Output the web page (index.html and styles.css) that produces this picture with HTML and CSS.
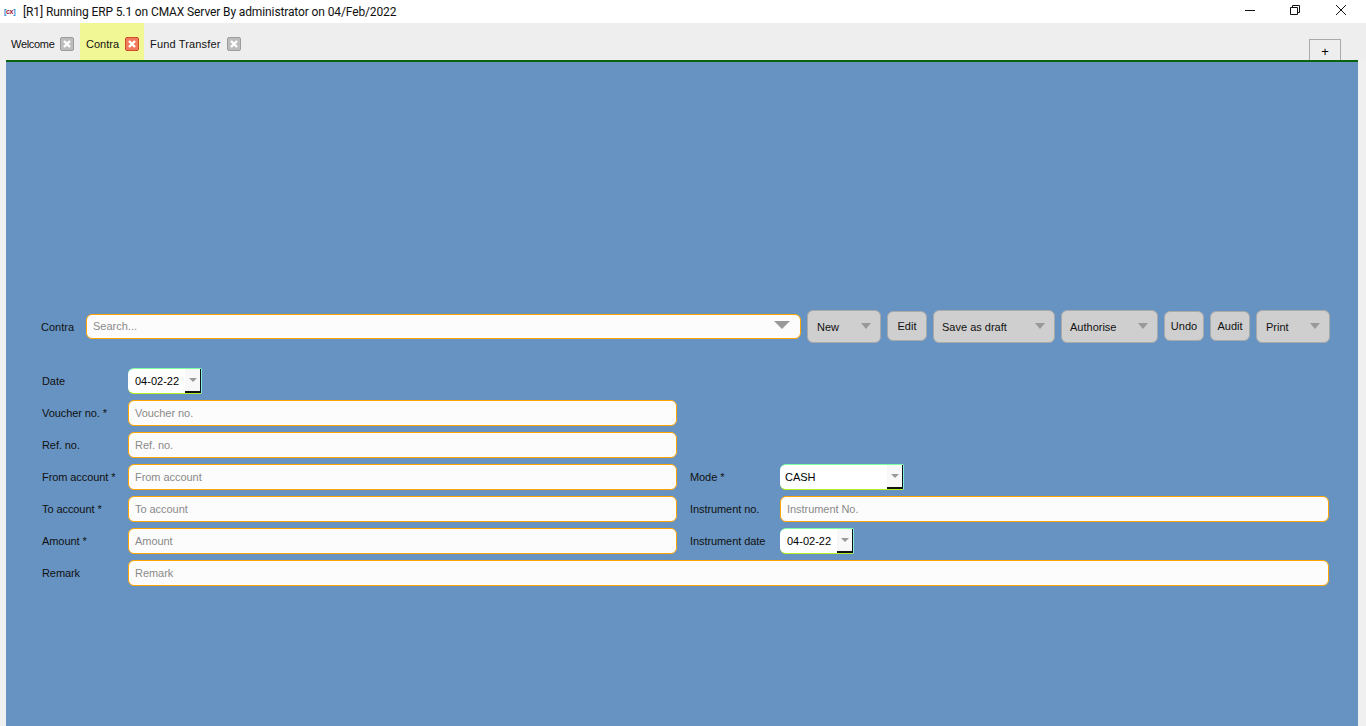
FILE: index.html
```html
<!DOCTYPE html>
<html lang="en">
<head>
<meta charset="utf-8">
<title>Running ERP</title>
<link rel="stylesheet" href="styles.css">
</head>
<body>
<header class="titlebar">
  <span class="app-icon"><span class="app-bracket">[</span>cx<span class="app-bracket">]</span></span>
  <span class="title">[R1] Running ERP 5.1 on CMAX Server By administrator on 04/Feb/2022</span>
  <div class="win-controls">
    <svg class="win-btn" viewBox="0 0 46 23"><path d="M19 10.5h10" stroke="#111" fill="none"/></svg>
    <svg class="win-btn" viewBox="0 0 46 23"><path d="M18.5 7.500h7v7h-7zM20.500 7.500v-2h7v7h-2" stroke="#111" fill="none"/></svg>
    <svg class="win-btn" viewBox="0 0 46 23"><path d="M18 5l10 10M28 5l-10 10" stroke="#111" fill="none"/></svg>
  </div>
</header>
<nav class="tabbar">
  <div class="tab tab-first"><span>Welcome</span><svg class="tab-close" viewBox="0 0 12 12"><path d="M3 3l6 6M9 3l-6 6"/></svg></div>
  <div class="tab tab-active"><span>Contra</span><svg class="tab-close" viewBox="0 0 12 12"><path d="M3 3l6 6M9 3l-6 6"/></svg></div>
  <div class="tab"><span>Fund Transfer</span><svg class="tab-close" viewBox="0 0 12 12"><path d="M3 3l6 6M9 3l-6 6"/></svg></div>
  <div class="tab-add">+</div>
</nav>
<main class="panel">
  <section class="toolbar">
    <label class="toolbar-label">Contra</label>
    <div class="search"><span class="ph">Search...</span><i class="caret caret-big"></i></div>
    <div class="btn btn-menu w-new"><span>New</span><i class="caret"></i></div>
    <div class="btn btn-plain w-small">Edit</div>
    <div class="btn btn-menu w-save"><span>Save as draft</span><i class="caret"></i></div>
    <div class="btn btn-menu w-auth"><span>Authorise</span><i class="caret"></i></div>
    <div class="btn btn-plain w-small">Undo</div>
    <div class="btn btn-plain w-small">Audit</div>
    <div class="btn btn-menu w-new"><span>Print</span><i class="caret"></i></div>
  </section>
  <section class="form">
    <label>Date</label>
    <div class="select select-date"><span>04-02-22</span><b class="drop"><i class="caret caret-small"></i></b></div>

    <label>Voucher no. *</label>
    <div class="input ph">Voucher no.</div>

    <label>Ref. no.</label>
    <div class="input ph">Ref. no.</div>

    <label>From account *</label>
    <div class="input ph">From account</div>
    <label class="label-2">Mode *</label>
    <div class="select select-mode"><span>CASH</span><b class="drop"><i class="caret caret-small"></i></b></div>

    <label>To account *</label>
    <div class="input ph">To account</div>
    <label class="label-2">Instrument no.</label>
    <div class="input ph">Instrument No.</div>

    <label>Amount *</label>
    <div class="input ph">Amount</div>
    <label class="label-2">Instrument date</label>
    <div class="select select-date"><span>04-02-22</span><b class="drop"><i class="caret caret-small"></i></b></div>

    <label>Remark</label>
    <div class="input span-all ph">Remark</div>
  </section>
</main>
</body>
</html>
```
FILE: styles.css
```css
* { box-sizing: border-box; }
html, body { height: 100%; }
body {
  margin: 0;
  height: 726px;
  overflow: hidden;
  display: flex;
  flex-direction: column;
  background: #f0f0f0;
  font: 11px "Liberation Sans", Arial, sans-serif;
  color: #111;
}
.titlebar {
  height: 23px;
  flex: none;
  background: #fff;
  display: flex;
  align-items: center;
  padding-left: 4px;
}
.app-icon { font: bold 7px "Liberation Sans", sans-serif; color: #a0103a; width: 19px; letter-spacing: -0.3px; }
.app-bracket { color: #1a7fd0; }
.title { font: 12px Roboto, sans-serif; color: #111; letter-spacing: -0.12px; }
.win-controls { margin-left: auto; display: flex; padding-right: 2px; }
.win-btn { width: 46px; height: 23px; display: block; }

.tabbar {
  height: 37px;
  flex: none;
  background: #eee;
  display: flex;
  align-items: stretch;
  padding-left: 5px;
  padding-right: 25px;
}
.tab {
  display: flex;
  align-items: center;
  gap: 6px;
  padding: 5px 6px 0;
  height: 37px;
  letter-spacing: 0.16px;
}
.tab-first { width: 75px; gap: 5px; }
.tab-first span { letter-spacing: -0.3px; }
.tab-active { background: #f1f795; width: 64px; letter-spacing: 0; }
.tab-close {
  width: 14px;
  height: 14px;
  flex: none;
  border: 1px solid #9c9c9c;
  border-radius: 2px;
  background: #bdbdbd;
}
.tab-close path { stroke: #fff; stroke-width: 2.4; fill: none; }
.tab-active .tab-close { background: #ee7b5c; border-color: #d24a28; }
.tab-add {
  margin-left: auto;
  margin-top: 16px;
  width: 32px;
  height: 21px;
  border: 1px solid #aaa;
  border-bottom: 0;
  text-align: center;
  font: 13px/23px "Liberation Sans", sans-serif;
  color: #000;
}

.panel {
  flex: 1;
  margin: 0 8px 0 6px;
  background: #6693c1;
  border-top: 2px solid #0a6310;
  padding: 247px 28px 0 36px;
}
.toolbar {
  display: flex;
  align-items: center;
  height: 34px;
  gap: 6px;
  margin-left: 1px;
}
.toolbar-label { width: 39px; margin-left: -2px; padding-top: 2px; }
.search {
  width: 715px;
  height: 25px;
  background: #fcfcfc;
  border: 1px solid #ffa500;
  border-radius: 6px;
  padding: 0 6px;
  display: flex;
  align-items: center;
  justify-content: space-between;
}
.ph { color: #8a8a8a; }
.caret {
  display: block;
  width: 0;
  height: 0;
  border-left: 5px solid transparent;
  border-right: 5px solid transparent;
  border-top: 6px solid #999;
}
.caret-big { border-left-width: 8px; border-right-width: 8px; border-top-width: 8px; margin-right: 4px; margin-bottom: 3px; }
.caret-small { border-left-width: 4px; border-right-width: 4px; border-top-width: 4px; }
.btn {
  background: #cfcfcf;
  border: 1px solid #a9a9a9;
  border-radius: 6px;
  display: flex;
  align-items: center;
  color: #111;
}
.btn-menu { height: 33px; justify-content: space-between; padding: 1px 9px 0 9px; }
.btn-menu .caret { margin-bottom: 2px; }
.btn-plain { height: 30px; justify-content: center; }
.w-new { width: 74px; }
.w-small { width: 40px; }
.w-save { width: 122px; padding-left: 8px; }
.w-auth { width: 97px; padding-left: 8px; }

.form {
  margin-top: 25px;
  display: grid;
  grid-template-columns: 86px 549px 103px 549px;
  grid-auto-rows: 26px;
  row-gap: 6px;
  align-items: center;
}
.form label { grid-column: 1; letter-spacing: -0.08px; }
.form .label-2 { grid-column: 3; padding-left: 13px; }
.input {
  grid-column: 2;
  height: 26px;
  background: #fcfcfc;
  border: 1px solid #ffa500;
  border-radius: 6px;
  padding: 0 6px;
  line-height: 24px;
  letter-spacing: -0.05px;
}
.label-2 + .input, .label-2 + .select { grid-column: 4; }
.input.span-all { grid-column: 2 / span 3; }
.select {
  grid-column: 2;
  height: 26px;
  background: #fff;
  border-radius: 6px 2px 2px 6px;
  border-top: 1px solid #80ffa0;
  border-bottom: 1px solid #b4f020;
  border-right: 1px solid #7ff0e0;
  display: flex;
  align-items: center;
  justify-content: space-between;
  padding-left: 7px;
  color: #000;
}
.select-date { width: 74px; justify-self: start; }
.select-mode { width: 124px; justify-self: start; padding-left: 5px; }
.drop {
  width: 16px;
  align-self: stretch;
  border-right: 1px solid #111;
  border-bottom: 2px solid #111;
  display: flex;
  align-items: center;
  justify-content: center;
  background: #f8f8f8;
}
```
